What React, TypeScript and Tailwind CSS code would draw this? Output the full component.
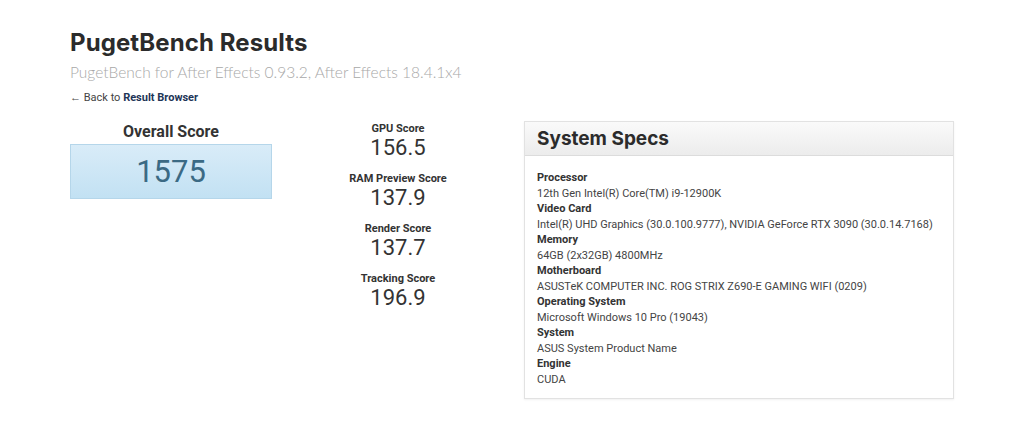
const scores = [
  { label: "GPU Score", value: "156.5" },
  { label: "RAM Preview Score", value: "137.9" },
  { label: "Render Score", value: "137.7" },
  { label: "Tracking Score", value: "196.9" },
];

const specs = [
  { label: "Processor", value: "12th Gen Intel(R) Core(TM) i9-12900K" },
  { label: "Video Card", value: "Intel(R) UHD Graphics (30.0.100.9777), NVIDIA GeForce RTX 3090 (30.0.14.7168)" },
  { label: "Memory", value: "64GB (2x32GB) 4800MHz" },
  { label: "Motherboard", value: "ASUSTeK COMPUTER INC. ROG STRIX Z690-E GAMING WIFI (0209)" },
  { label: "Operating System", value: "Microsoft Windows 10 Pro (19043)" },
  { label: "System", value: "ASUS System Product Name" },
  { label: "Engine", value: "CUDA" },
];

export default function App() {
  return (
    <div className="w-[1024px] h-[431px] bg-white overflow-hidden font-['Roboto',sans-serif] text-[#333]">
      <div className="pl-[70px] pt-[29px]">
        <h1 className="font-['Inter',sans-serif] font-bold text-[24px] leading-[28px] text-[#2b2b2b] tracking-[0.1px]">
          PugetBench Results
        </h1>
        <p className="mt-[5px] font-['Lato',sans-serif] font-light text-[15.5px] leading-[20px] text-[#a8a8a8]">
          PugetBench for After Effects 0.93.2, After Effects 18.4.1x4
        </p>
        <p className="mt-[9px] text-[11px] leading-[14px] text-[#444]">
          ← Back to <span className="font-bold text-[#1d3557]">Result Browser</span>
        </p>

        <div className="flex items-start mt-[16px]">
          {/* overall */}
          <div className="w-[202px] mt-[1px] flex flex-col items-center">
            <div className="font-bold text-[16px] leading-[20px] text-[#333]">Overall Score</div>
            <div className="mt-[2px] w-full h-[55px] flex items-center justify-center border border-[#b5d6ea] bg-gradient-to-b from-[#d9ecf8] to-[#c2e1f3]">
              <span className="text-[31px] leading-[36px] text-[#3b6a84]">1575</span>
            </div>
          </div>

          {/* sub scores */}
          <div className="ml-[58px] w-[136px] flex flex-col items-center gap-[10px] mt-[1px]">
            {scores.map((s) => (
              <div key={s.label} className="flex flex-col items-center">
                <div className="font-bold text-[11px] leading-[14px] text-[#333]">{s.label}</div>
                <div className="-mt-[2px] text-[22px] leading-[28px] text-[#333]">{s.value}</div>
              </div>
            ))}
          </div>

          {/* specs */}
          <div className="ml-[58px] w-[430px] border border-[#e2e2e2] shadow-[0_1px_2px_rgba(0,0,0,0.06)]">
            <div className="h-[34px] flex items-center px-[12px] bg-gradient-to-b from-[#fafafa] to-[#ececec] border-b border-[#dcdcdc]">
              <span className="font-['Inter',sans-serif] font-bold text-[19px] leading-[24px] text-[#2b2b2b]">System Specs</span>
            </div>
            <div className="px-[12px] pt-[14px] pb-[11px] text-[11px] leading-[15.5px]">
              {specs.map((s) => (
                <div key={s.label}>
                  <div className="font-bold text-[#333]">{s.label}</div>
                  <div className="text-[#444]">{s.value}</div>
                </div>
              ))}
            </div>
          </div>
        </div>
      </div>
    </div>
  );
}
